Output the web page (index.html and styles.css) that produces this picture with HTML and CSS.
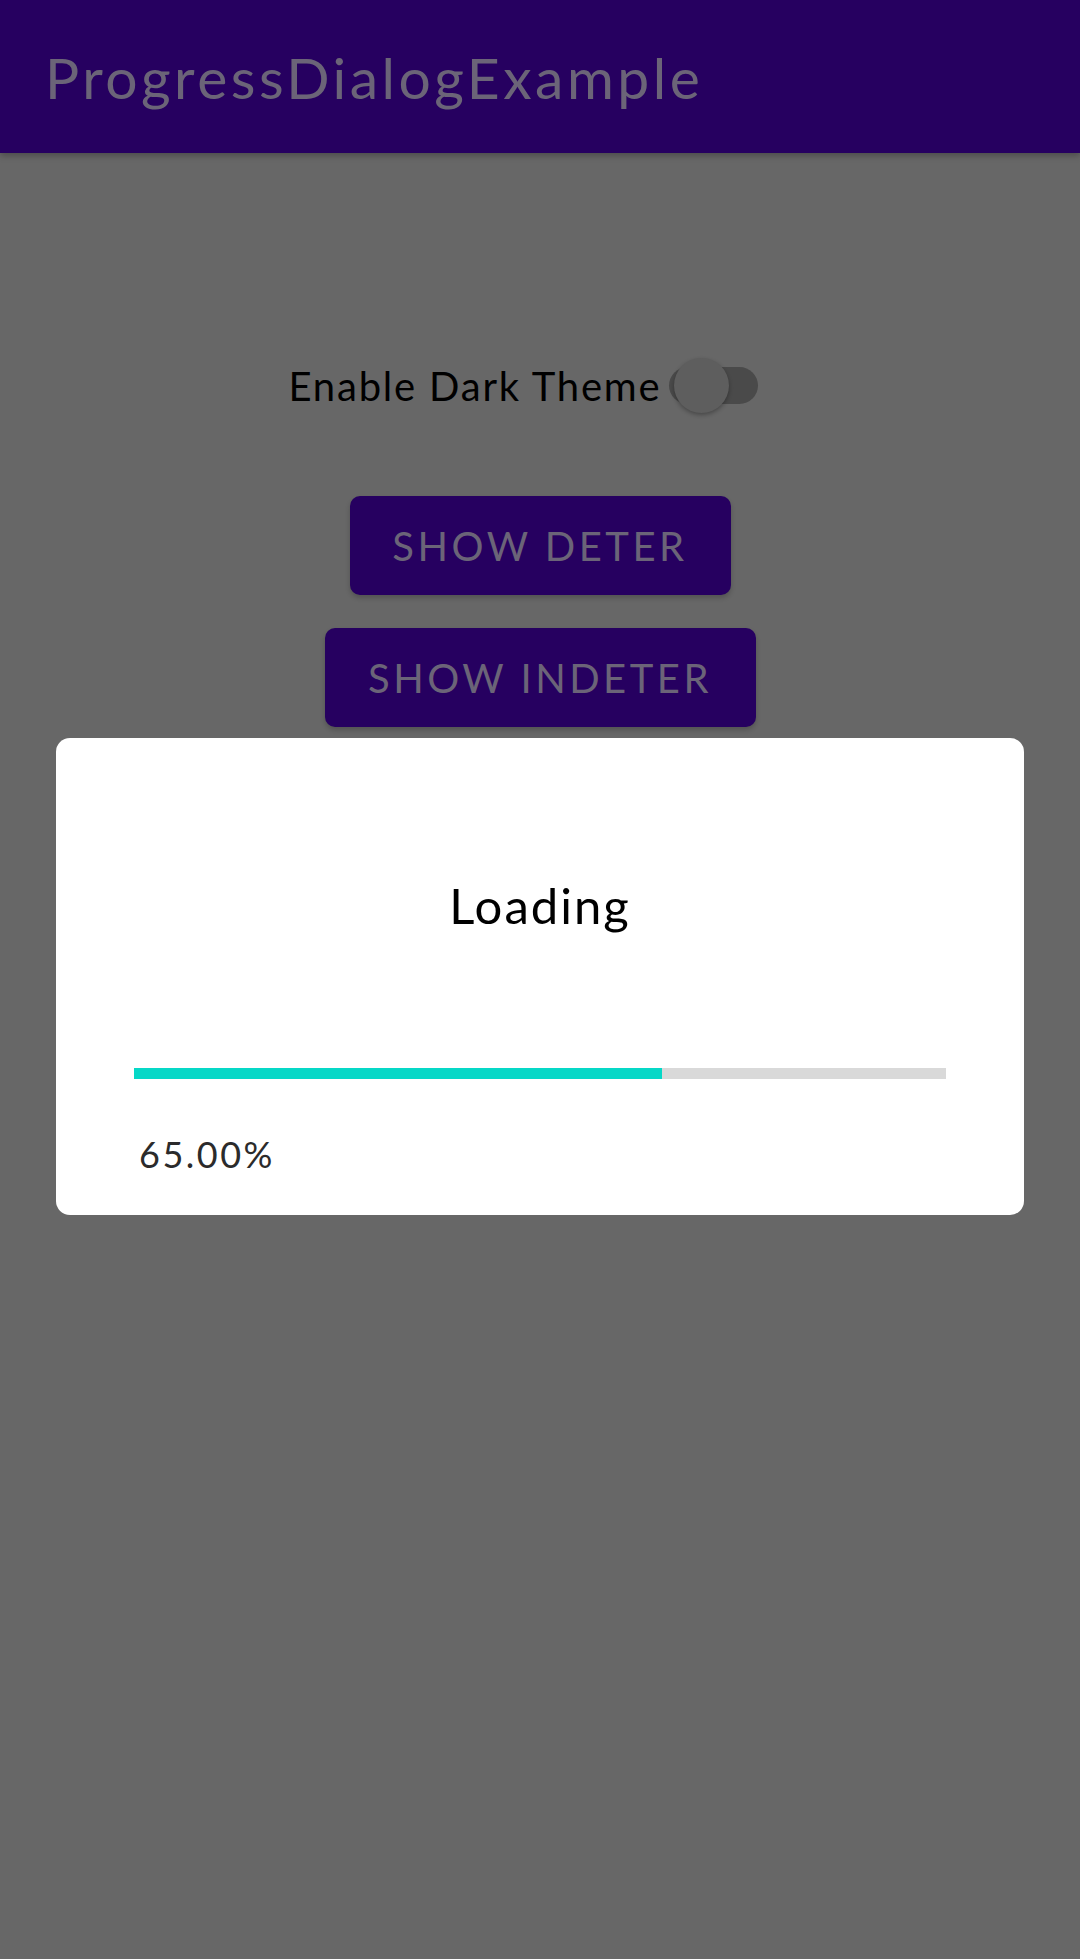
FILE: index.html
```html
<!DOCTYPE html>
<html lang="en">
<head>
<meta charset="utf-8">
<title>ProgressDialogExample</title>
<link rel="stylesheet" href="styles.css">
</head>
<body>
<div class="screen">
  <header class="appbar">
    <h1 class="appbar-title">ProgressDialogExample</h1>
  </header>
  <main class="content">
    <div class="theme-row">
      <span class="theme-label">Enable Dark Theme</span>
      <span class="switch">
        <span class="switch-track"></span>
        <span class="switch-thumb"></span>
      </span>
    </div>
    <button class="btn btn-first">SHOW DETER</button>
    <button class="btn btn-second">SHOW INDETER</button>
  </main>
  <div class="dialog">
    <div class="dialog-title">Loading</div>
    <div class="progress">
      <div class="progress-fill" style="width: 65%"></div>
    </div>
    <div class="progress-text">65.00%</div>
  </div>
</div>
</body>
</html>
```

FILE: styles.css
```css
* {
  box-sizing: border-box;
}

html, body {
  margin: 0;
  padding: 0;
}

body {
  background: #676767;
  font-family: Lato, "Open Sans", sans-serif;
}

.screen {
  position: relative;
  width: 1080px;
  height: 1959px;
  background: #676767;
  overflow: hidden;
}

.appbar {
  height: 153px;
  background: #260060;
  display: flex;
  align-items: center;
  padding-left: 45px;
  box-shadow: 0 3px 6px rgba(0, 0, 0, 0.25);
  position: relative;
  z-index: 1;
}

.appbar-title {
  margin: 0;
  font-weight: 400;
  font-size: 57px;
  line-height: 70px;
  letter-spacing: 3.5px;
  color: #6b6478;
}

.content {
  display: flex;
  flex-direction: column;
  align-items: center;
  padding-top: 205px;
}

.theme-row {
  display: flex;
  align-items: center;
  height: 55px;
  padding-right: 33px;
  gap: 8px;
}

.theme-label {
  font-size: 40px;
  line-height: 50px;
  letter-spacing: 1.8px;
  color: #000;
}

.switch {
  position: relative;
  width: 89px;
  height: 55px;
  display: block;
}

.switch-track {
  position: absolute;
  left: 0;
  right: 0;
  top: 9px;
  height: 37px;
  border-radius: 19px;
  background: #4a4a4a;
}

.switch-thumb {
  position: absolute;
  left: 5px;
  top: 0;
  width: 55px;
  height: 55px;
  border-radius: 50%;
  background: #5e5e5e;
  box-shadow: 0 2px 4px rgba(0, 0, 0, 0.3);
}

.btn {
  border: none;
  height: 99px;
  border-radius: 10px;
  background: #260060;
  color: #6b6478;
  font-family: Lato, "Open Sans", sans-serif;
  font-size: 40px;
  letter-spacing: 3.5px;
  box-shadow: 0 3px 5px rgba(0, 0, 0, 0.2);
  display: flex;
  align-items: center;
  justify-content: center;
  padding: 0;
}

.btn-first {
  margin-top: 83px;
  width: 381px;
}

.btn-second {
  margin-top: 33px;
  width: 431px;
}

.dialog {
  position: absolute;
  left: 56px;
  top: 738px;
  width: 968px;
  height: 477px;
  background: #fff;
  border-radius: 14px;
  padding: 137px 78px 0 78px;
  display: flex;
  flex-direction: column;
}

.dialog-title {
  font-size: 49px;
  line-height: 60px;
  letter-spacing: 2px;
  text-align: center;
  color: #000;
}

.progress {
  margin-top: 133px;
  height: 11px;
  background: #d9d9d9;
}

.progress-fill {
  height: 100%;
  background: #06d8c7;
}

.progress-text {
  margin-top: 54px;
  padding-left: 5px;
  font-size: 36px;
  line-height: 42px;
  letter-spacing: 2.5px;
  color: #2b2b2b;
}
```
